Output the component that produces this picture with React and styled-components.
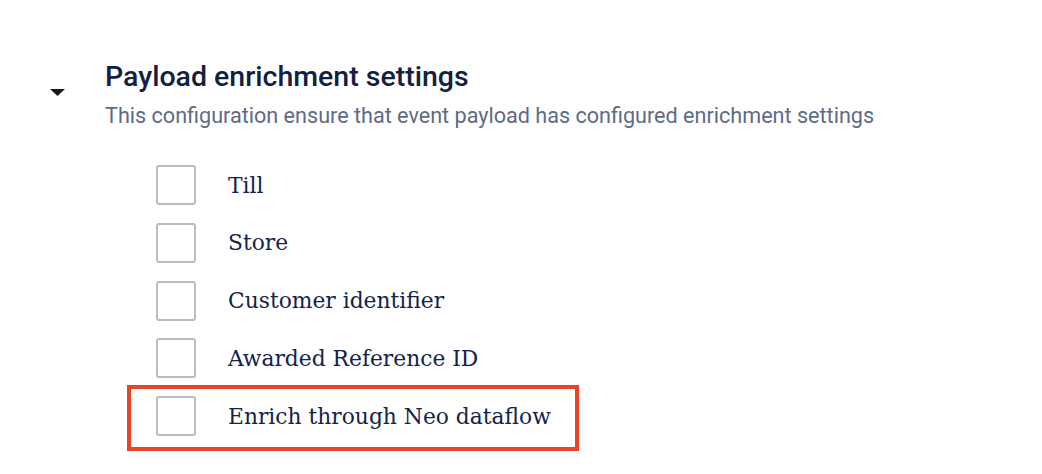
import React from "react";
import styled, { createGlobalStyle } from "styled-components";

const GlobalStyle = createGlobalStyle`
  html, body, #root {
    margin: 0;
    padding: 0;
    min-height: 100%;
    background: #ffffff;
  }
  html, body {
    height: 100%;
  }
  body {
    font-family: Roboto, "Liberation Sans", sans-serif;
  }
`;

const options = [
  "Till",
  "Store",
  "Customer identifier",
  "Awarded Reference ID",
  "Enrich through Neo dataflow",
];

export default function App() {
  return (
    <>
      <GlobalStyle />
      <Section>
        <Toggle aria-label="collapse">
          <svg width="15" height="7" viewBox="0 0 15 7">
            <path d="M0 0 L15 0 L7.5 7 Z" fill="#1a1a1a" />
          </svg>
        </Toggle>
        <Body>
          <Title>Payload enrichment settings</Title>
          <Subtitle>
            This configuration ensure that event payload has configured
            enrichment settings
          </Subtitle>
          <OptionList>
            {options.map((label, i) => (
              <Option key={label} $highlighted={i === options.length - 1}>
                <Box type="checkbox" />
                <OptionLabel>{label}</OptionLabel>
              </Option>
            ))}
          </OptionList>
        </Body>
      </Section>
    </>
  );
}

const Section = styled.div`
  display: flex;
  align-items: flex-start;
  padding: 60px 0 0 50px;
`;

const Toggle = styled.div`
  width: 15px;
  height: 7px;
  margin-top: 29px;
  margin-right: 40px;
  display: flex;
  svg {
    display: block;
  }
`;

const Body = styled.div`
  display: flex;
  flex-direction: column;
`;

const Title = styled.h2`
  margin: 0;
  font-family: Roboto, "Liberation Sans", sans-serif;
  font-size: 28.5px;
  font-weight: 500;
  line-height: 34px;
  color: #12203f;
`;

const Subtitle = styled.p`
  margin: 9px 0 0;
  font-family: Roboto, "Liberation Sans", sans-serif;
  font-size: 21.6px;
  line-height: 26px;
  color: #5f6a84;
`;

const OptionList = styled.div`
  display: flex;
  flex-direction: column;
  gap: 17.75px;
  margin-top: 36px;
  padding-left: 51px;
`;

const Option = styled.label`
  position: relative;
  display: flex;
  align-items: center;
  gap: 32px;
  height: 40px;

  &::after {
    content: "";
    display: ${(p) => (p.$highlighted ? "block" : "none")};
    position: absolute;
    left: -29px;
    top: -11px;
    width: 452px;
    height: 66px;
    box-sizing: border-box;
    border: 4px solid #e9432b;
    pointer-events: none;
  }
`;

const Box = styled.input`
  appearance: none;
  margin: 0;
  width: 40px;
  height: 40px;
  box-sizing: border-box;
  border: 2.5px solid #b7bdc7;
  border-radius: 3px;
  background: #fff;
  flex-shrink: 0;
`;

const OptionLabel = styled.span`
  font-family: "DejaVu Serif", "Liberation Serif", serif;
  font-size: 21.8px;
  color: #14234a;
`;
